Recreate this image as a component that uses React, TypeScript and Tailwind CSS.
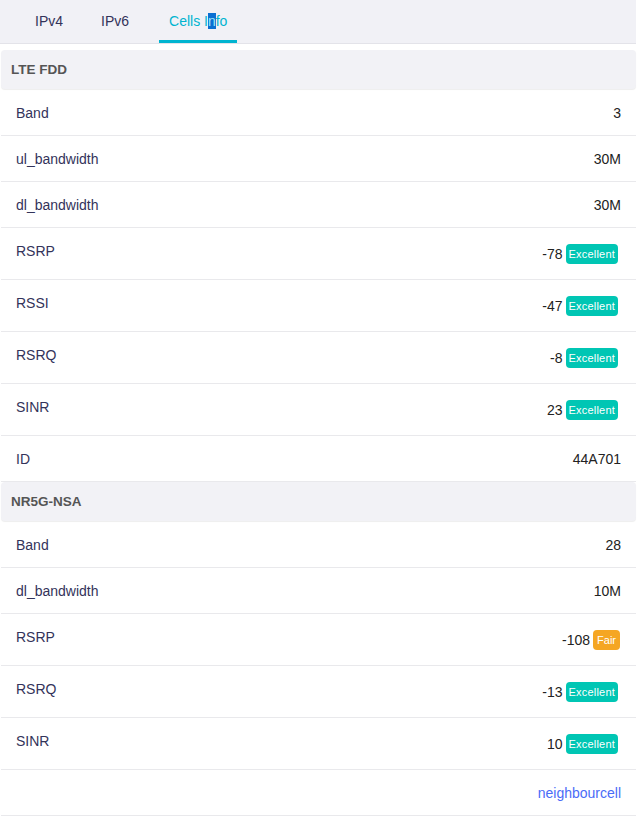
import React from "react";

type Row = { label: string; value: string; badge?: "Excellent" | "Fair" };

const lte: Row[] = [
  { label: "Band", value: "3" },
  { label: "ul_bandwidth", value: "30M" },
  { label: "dl_bandwidth", value: "30M" },
  { label: "RSRP", value: "-78", badge: "Excellent" },
  { label: "RSSI", value: "-47", badge: "Excellent" },
  { label: "RSRQ", value: "-8", badge: "Excellent" },
  { label: "SINR", value: "23", badge: "Excellent" },
  { label: "ID", value: "44A701" },
];

const nr: Row[] = [
  { label: "Band", value: "28" },
  { label: "dl_bandwidth", value: "10M" },
  { label: "RSRP", value: "-108", badge: "Fair" },
  { label: "RSRQ", value: "-13", badge: "Excellent" },
  { label: "SINR", value: "10", badge: "Excellent" },
];

function Badge({ kind }: { kind: "Excellent" | "Fair" }) {
  return (
    <span
      className={`ml-[3px] inline-flex h-5 items-center rounded-[4px] text-[11px] leading-none text-white ${
        kind === "Fair" ? "mr-px bg-[#f5a623] px-[4px]" : "mr-[3px] bg-[#00c6b4] px-[3px] tracking-[0.2px]"
      }`}
    >
      {kind}
    </span>
  );
}

function InfoRow({ row }: { row: Row }) {
  return (
    <div className="flex items-start justify-between border-b border-[#e9e9ec] pl-[15px] pr-[15px] pt-[15px] pb-[14px]">
      <span className="text-[14px] leading-4 text-[#33335a]">{row.label}</span>
      {row.badge ? (
        <span className="flex h-[22px] items-center text-[14px] leading-4 text-[#222]">
          {row.value}
          <Badge kind={row.badge} />
        </span>
      ) : (
        <span className="text-[14px] leading-4 text-[#222]">{row.value}</span>
      )}
    </div>
  );
}

function Section({ title, rows }: { title: string; rows: Row[] }) {
  return (
    <div>
      <div className="mb-px flex h-[39px] items-center rounded-[4px] bg-[#f2f2f6] pl-[10px] pt-px text-[13.5px] font-bold text-[#555] shadow-[0_1px_1px_rgba(0,0,0,0.07)]">
        {title}
      </div>
      {rows.map((r) => (
        <InfoRow key={title + r.label} row={r} />
      ))}
    </div>
  );
}

export default function App() {
  return (
    <div className="min-h-screen bg-white font-['Liberation_Sans',Arial,sans-serif]">
      <div className="w-[636px]">
        {/* Tabs */}
        <div className="flex h-11 items-end border-b border-[#e3e3e9] bg-[#f1f1f6] pl-[25px]">
          <div className="flex gap-[18px]">
            <button className="h-[43px] px-[10px] text-[14px] text-[#33335a]">IPv4</button>
            <button className="h-[43px] px-[10px] text-[14px] text-[#33335a]">IPv6</button>
            <button className="ml-[2px] h-[43px] border-b-[3px] border-[#00b4d0] px-[10px] pt-[3px] text-[14px] text-[#00b4d0]">
              Cells I<span className="bg-[#0a6fd2] text-[#9ee6f5]">n</span>fo
            </button>
          </div>
        </div>

        <div className="mt-[6px] pl-px">
          <Section title="LTE FDD" rows={lte} />
          <Section title="NR5G-NSA" rows={nr} />
          <div className="flex justify-end border-b border-[#e9e9ec] pr-[15px] pt-[15px] pb-[14px]">
            <a className="cursor-pointer text-[14px] leading-4 text-[#4a6cf7]">neighbourcell</a>
          </div>
        </div>
      </div>
    </div>
  );
}
